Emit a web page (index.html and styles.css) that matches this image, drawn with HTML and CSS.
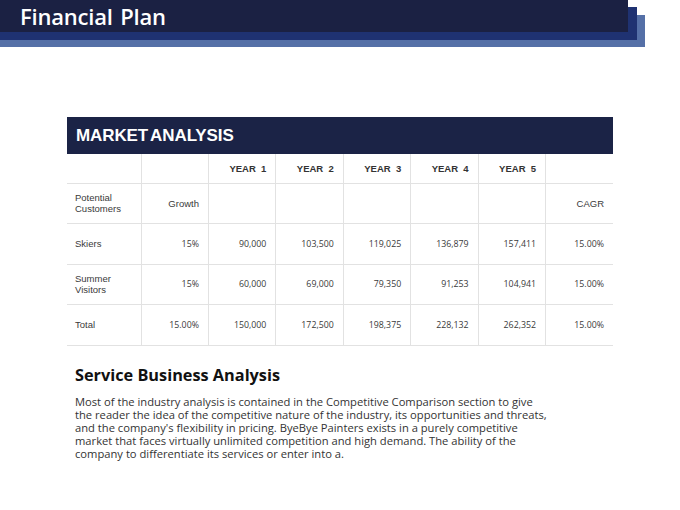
FILE: index.html
```html
<!DOCTYPE html>
<html>
<head>
<meta charset="utf-8">
<link rel="stylesheet" href="styles.css">
</head>
<body>
<header class="title-bar">
  <h1 class="title">Financial Plan</h1>
</header>

<section class="market">
  <div class="market-head">MARKET ANALYSIS</div>
  <table class="grid">
    <colgroup>
      <col class="c-label"><col><col><col><col><col><col><col>
    </colgroup>
    <tr class="r-head">
      <td></td><td></td>
      <th>YEAR&nbsp; 1</th><th>YEAR&nbsp; 2</th><th>YEAR&nbsp; 3</th><th>YEAR&nbsp; 4</th><th>YEAR&nbsp; 5</th>
      <td></td>
    </tr>
    <tr>
      <td class="lbl">Potential<br>Customers</td><td class="lbl-r">Growth</td>
      <td></td><td></td><td></td><td></td><td></td>
      <td class="lbl-r">CAGR</td>
    </tr>
    <tr>
      <td class="lbl">Skiers</td><td>15%</td>
      <td>90,000</td><td>103,500</td><td>119,025</td><td>136,879</td><td>157,411</td><td>15.00%</td>
    </tr>
    <tr>
      <td class="lbl">Summer<br>Visitors</td><td>15%</td>
      <td>60,000</td><td>69,000</td><td>79,350</td><td>91,253</td><td>104,941</td><td>15.00%</td>
    </tr>
    <tr>
      <td class="lbl">Total</td><td>15.00%</td>
      <td>150,000</td><td>172,500</td><td>198,375</td><td>228,132</td><td>262,352</td><td>15.00%</td>
    </tr>
  </table>
</section>

<section class="service">
  <h2 class="service-title">Service Business Analysis</h2>
  <p class="service-text">Most of the industry analysis is contained in the Competitive Comparison section to give<br>the reader the idea of the competitive nature of the industry, its opportunities and threats,<br>and the company's flexibility in pricing. ByeBye Painters exists in a purely competitive<br>market that faces virtually unlimited competition and high demand. The ability of the<br>company to differentiate its services or enter into a.</p>
</section>
</body>
</html>
```

FILE: styles.css
```css
html, body {
  margin: 0;
  padding: 0;
  background: #ffffff;
}
body {
  width: 680px;
  height: 510px;
  overflow: hidden;
  font-family: "Open Sans", "Noto Sans", sans-serif;
}

/* title bar with two stepped bands behind it */
.title-bar {
  width: 645px;
  height: 47px;
  background:
    linear-gradient(#1b2143, #1b2143) 0 0 / 628px 32px no-repeat,
    linear-gradient(#1f3272, #1f3272) 0 7px / 637px 33px no-repeat,
    linear-gradient(#5570a7, #5570a7) 0 15px / 645px 32px no-repeat;
}
.title {
  margin: 0 0 0 20px;
  font-family: "Open Sans", sans-serif;
  font-weight: 600;
  font-size: 22px;
  color: #ffffff;
  letter-spacing: -0.2px;
  word-spacing: 2px;
  line-height: 32px;
}

.market {
  margin: 70px 0 0 67px;
  width: 546px;
}
.market-head {
  height: 37px;
  background: #1b2346;
  color: #ffffff;
  font-family: "Liberation Sans", Arial, sans-serif;
  font-weight: bold;
  font-size: 17px;
  letter-spacing: -0.1px;
  word-spacing: -2px;
  padding-left: 9px;
  display: flex;
  align-items: center;
}

.grid {
  width: 546px;
  border-collapse: collapse;
  table-layout: fixed;
}
.grid col { width: 67.4px; }
.grid col.c-label { width: 74px; }

.grid td, .grid th {
  border-left: 1px solid #e2e2e2;
  border-bottom: 1px solid #e2e2e2;
  padding: 0 9px 0 6px;
  text-align: right;
  vertical-align: middle;
  font-family: "Open Sans", sans-serif;
  font-size: 8.8px;
  color: #3a3a3a;
  height: 39.5px;
}
.grid tr > :first-child { border-left: none; }
.grid .r-head td, .grid .r-head th { height: 28.5px; }
.grid th {
  font-family: "Liberation Sans", Arial, sans-serif;
  font-weight: bold;
  font-size: 9.5px;
  color: #333;
}
.grid .lbl {
  text-align: left;
  padding-left: 8px;
  font-family: "Liberation Sans", Arial, sans-serif;
  font-size: 9.5px;
  line-height: 11px;
  color: #3a3a3a;
}
.grid .lbl-r {
  font-family: "Liberation Sans", Arial, sans-serif;
  font-size: 9.5px;
}

.service {
  margin: 18px 0 0 75px;
}
.service-title {
  margin: 0;
  font-family: "Open Sans", sans-serif;
  font-weight: 700;
  font-size: 16.3px;
  line-height: 22px;
  color: #111;
}
.service-text {
  margin: 9px 0 0 0;
  font-family: "Open Sans", sans-serif;
  font-size: 11.2px;
  line-height: 13px;
  color: #333;
}
```
